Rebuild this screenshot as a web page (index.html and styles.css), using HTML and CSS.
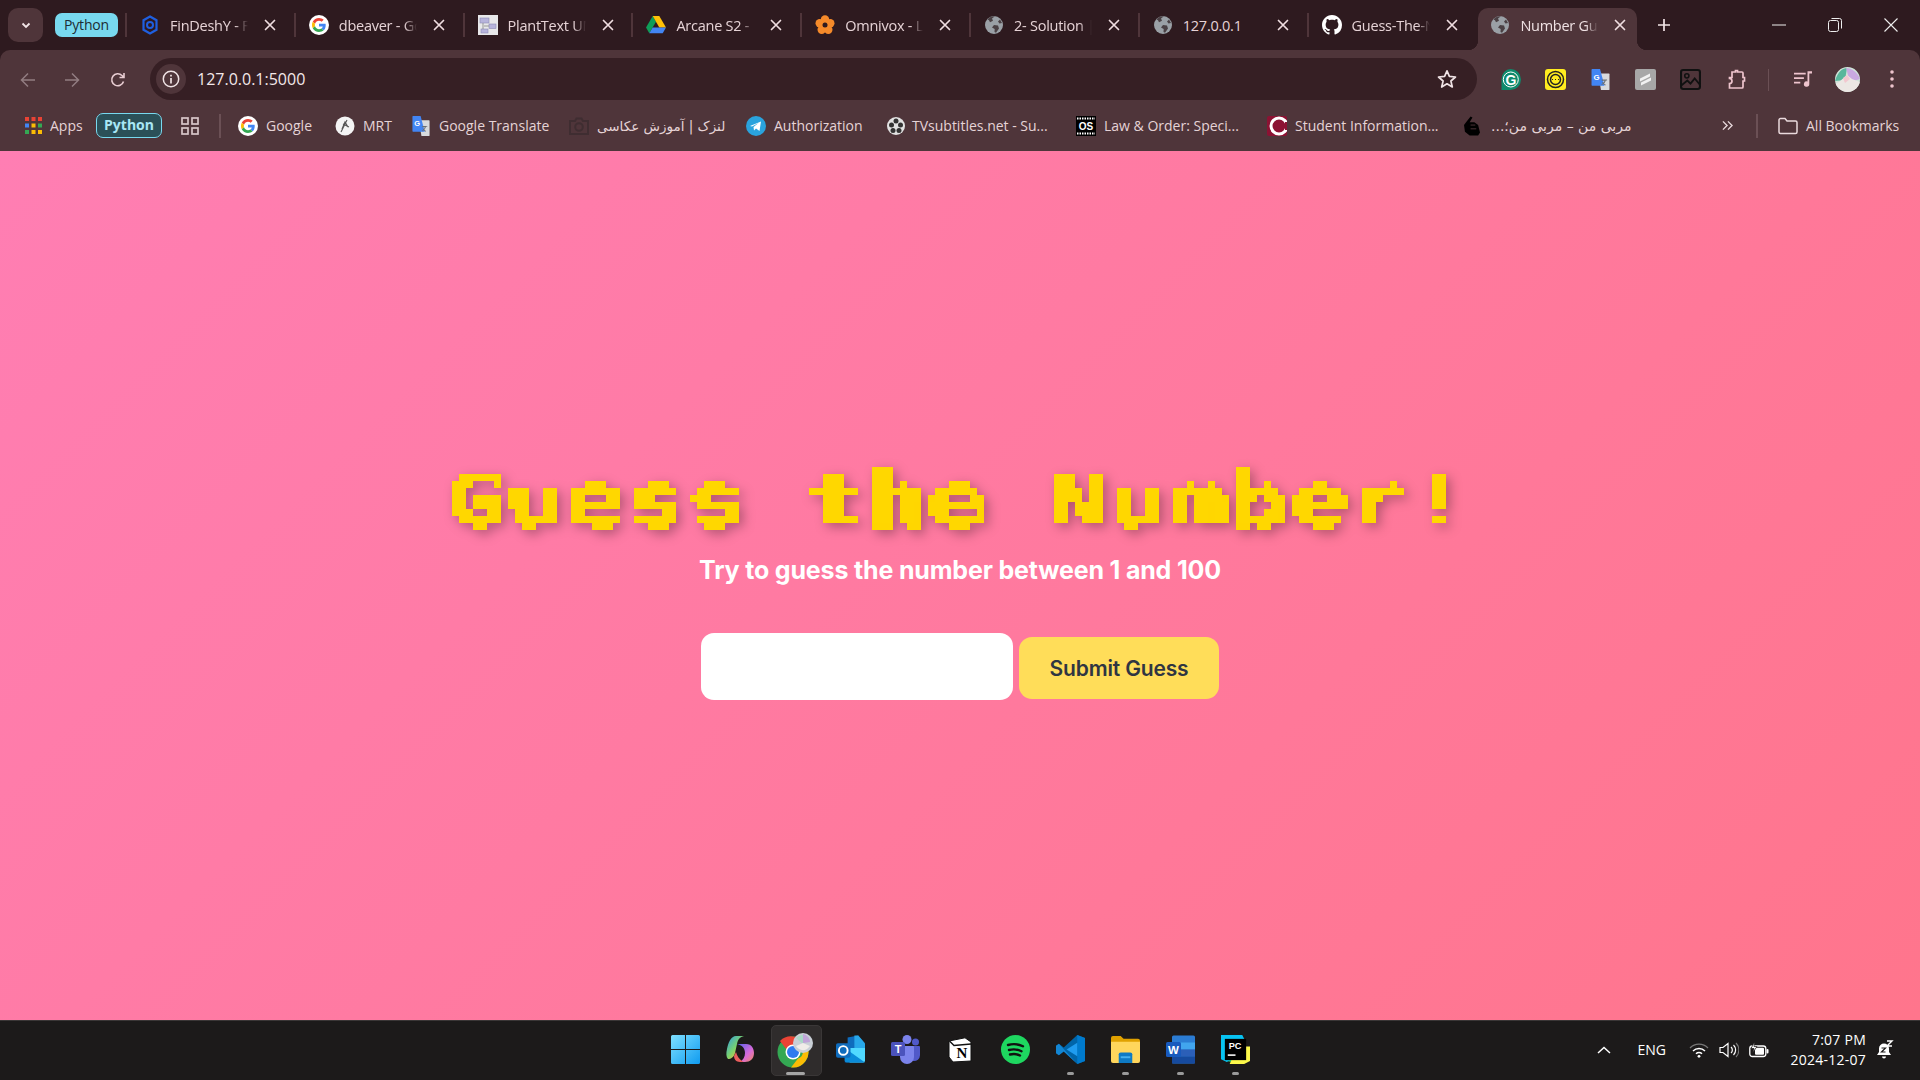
FILE: index.html
```html
<!DOCTYPE html>
<html lang="en">
<head>
<meta charset="utf-8">
<title>Number Guessing Game</title>
<link rel="stylesheet" href="styles.css">
</head>
<body>
<svg class="defs" aria-hidden="true">
  <defs>
    <filter id="pixelate" x="-10" y="-10" width="1100" height="110" filterUnits="userSpaceOnUse" primitiveUnits="userSpaceOnUse" color-interpolation-filters="sRGB">
      <feFlood x="3" y="3" width="1" height="1" flood-color="#000"/>
      <feComposite x="0" y="0" width="7" height="7"/>
      <feTile result="grid"/>
      <feComposite in="SourceGraphic" in2="grid" operator="in"/>
      <feComponentTransfer><feFuncA type="discrete" tableValues="0 1"/></feComponentTransfer>
      <feMorphology operator="dilate" radius="3"/>
    </filter>
  </defs>
  <symbol id="i-g" viewBox="0 0 48 48">
    <path fill="#EA4335" d="M24 9.5c3.54 0 6.71 1.22 9.21 3.6l6.85-6.85C35.9 2.38 30.47 0 24 0 14.62 0 6.51 5.38 2.56 13.22l7.98 6.19C12.43 13.72 17.74 9.5 24 9.5z"/>
    <path fill="#4285F4" d="M46.98 24.55c0-1.57-.15-3.09-.38-4.55H24v9.02h12.94c-.58 2.96-2.26 5.48-4.78 7.18l7.73 6c4.51-4.18 7.09-10.36 7.09-17.65z"/>
    <path fill="#FBBC05" d="M10.53 28.59c-.48-1.45-.76-2.99-.76-4.59s.27-3.14.76-4.59l-7.98-6.19C.92 16.46 0 20.12 0 24c0 3.88.92 7.54 2.56 10.78l7.97-6.19z"/>
    <path fill="#34A853" d="M24 48c6.48 0 11.93-2.13 15.89-5.81l-7.73-6c-2.15 1.45-4.92 2.3-8.16 2.3-6.26 0-11.57-4.22-13.47-9.91l-7.98 6.19C6.51 42.62 14.62 48 24 48z"/>
  </symbol>
  <symbol id="i-gw" viewBox="0 0 20 20">
    <circle cx="10" cy="10" r="10" fill="#fff"/>
    <use href="#i-g" x="3" y="3" width="14" height="14"/>
  </symbol>
  <symbol id="i-globe" viewBox="0 0 20 20">
    <circle cx="10" cy="10" r="9" fill="#9aa0a6"/>
    <path fill="#4a4044" d="M11 1.2 8 3.5l1 2.3-3 1.5-1-2-1.500-.8A9 9 0 0 1 11 1.200zM10 10l4 .6 1 2.800-3 4.300-1.500-.6.200-3.100L8 12.500zM16 4.500l2 3.500-2.500.5-1.500-2z"/>
  </symbol>
  <symbol id="i-x" viewBox="0 0 12 12">
    <path d="M1.500 1.500l9 9m0-9l-9 9" stroke="currentColor" stroke-width="1.700" fill="none" stroke-linecap="round"/>
  </symbol>
  <symbol id="i-translate" viewBox="0 0 21 24">
    <path fill="#d8dadd" d="M8 5h12a1 1 0 0 1 1 1v17a1 1 0 0 1-1 1H11z"/>
    <path fill="#4285f4" d="M1 0h9l5 19H1a1 1 0 0 1-1-1V1a1 1 0 0 1 1-1z"/>
    <path fill="#6a6f75" d="M12 12h6v1h-1.500c-.4 1.500-1 2.500-2 3.500l2 1.500-.6.800-2.200-1.700-1.800 1.600-.6-.8 1.800-1.500-.9-1.500h1l.6.900c.6-.7 1-1.500 1.300-2.300H12z"/>
  </symbol>
</svg>

<div class="chrome">
  <div class="tabstrip">
    <div class="tabsearch"><svg class="ic12" viewBox="0 0 12 12"><path d="M2.500 4.500 6 8l3.500-3.500" stroke="#f3e6e8" stroke-width="1.800" fill="none"/></svg></div>
    <div class="groupchip">Python</div>
    <div class="tab">
      <svg class="fav" viewBox="0 0 20 20"><path fill="none" stroke="#1f5fe0" stroke-width="2.200" d="M10 1.500 16.500 5.200v9.600L10 18.500 3.500 14.800V5.200z"/><circle cx="10" cy="10" r="3" fill="none" stroke="#1f5fe0" stroke-width="2"/></svg>
      <span class="tabtitle">FinDeshY - F</span><svg class="close"><use href="#i-x"/></svg>
    </div>
    <div class="tab">
      <svg class="fav"><use href="#i-gw"/></svg>
      <span class="tabtitle">dbeaver - Go</span><svg class="close"><use href="#i-x"/></svg>
    </div>
    <div class="tab">
      <svg class="fav" viewBox="0 0 20 20"><rect width="20" height="20" fill="#e8e8ea"/><rect x="2" y="3" width="9" height="5" fill="#b7b4dc" stroke="#8d8ab5" stroke-width=".6"/><rect x="11" y="9" width="7" height="4.500" fill="#b7b4dc" stroke="#8d8ab5" stroke-width=".6"/><rect x="3" y="14" width="7" height="4" fill="#b7b4dc" stroke="#8d8ab5" stroke-width=".6"/><path d="M5 8v6M6 11h5" stroke="#777" stroke-width=".7"/></svg>
      <span class="tabtitle">PlantText UM</span><svg class="close"><use href="#i-x"/></svg>
    </div>
    <div class="tab">
      <svg class="fav" viewBox="0 0 20 18"><path fill="#0f9d58" d="M6.700 0 0 11.500 3.300 17.300 10 5.800z"/><path fill="#ffc107" d="M6.700 0h6.600L20 11.500h-6.700z"/><path fill="#4285f4" d="M20 11.500H6.700L3.300 17.300h13.400z"/></svg>
      <span class="tabtitle">Arcane S2 -</span><svg class="close"><use href="#i-x"/></svg>
    </div>
    <div class="tab">
      <svg class="fav" viewBox="0 0 20 20"><g fill="#f58a2a"><circle cx="10" cy="4.500" r="4.200"/><circle cx="15.300" cy="8.300" r="4.200"/><circle cx="13.300" cy="14.800" r="4.200"/><circle cx="6.700" cy="14.800" r="4.200"/><circle cx="4.700" cy="8.300" r="4.200"/></g><circle cx="10" cy="10" r="2.500" fill="#2e1a1f"/></svg>
      <span class="tabtitle">Omnivox - L</span><svg class="close"><use href="#i-x"/></svg>
    </div>
    <div class="tab">
      <svg class="fav"><use href="#i-globe"/></svg>
      <span class="tabtitle">2- Solution |</span><svg class="close"><use href="#i-x"/></svg>
    </div>
    <div class="tab">
      <svg class="fav"><use href="#i-globe"/></svg>
      <span class="tabtitle tabtitle-plain">127.0.0.1</span><svg class="close"><use href="#i-x"/></svg>
    </div>
    <div class="tab">
      <svg class="fav fav-gh" viewBox="0 0 16 16"><path fill="#fff" d="M8 0C3.580 0 0 3.580 0 8c0 3.540 2.290 6.530 5.470 7.590.4.070.55-.17.55-.38 0-.19-.01-.82-.01-1.490-2.010.37-2.530-.49-2.690-.94-.09-.23-.48-.94-.82-1.130-.28-.15-.68-.52-.01-.53.63-.01 1.080.58 1.230.82.72 1.210 1.870.87 2.330.66.07-.52.28-.87.51-1.070-1.780-.2-3.640-.89-3.640-3.950 0-.87.31-1.590.82-2.150-.08-.2-.36-1.020.08-2.120 0 0 .67-.21 2.200.82.64-.18 1.320-.27 2-.27.68 0 1.360.09 2 .27 1.530-1.040 2.200-.82 2.200-.82.44 1.100.16 1.920.08 2.120.51.56.82 1.270.82 2.150 0 3.070-1.870 3.750-3.650 3.950.29.25.54.73.54 1.480 0 1.070-.01 1.930-.01 2.200 0 .21.15.46.55.38A8.013 8.013 0 0 0 16 8c0-4.420-3.580-8-8-8z"/></svg>
      <span class="tabtitle">Guess-The-N</span><svg class="close"><use href="#i-x"/></svg>
    </div>
    <div class="tab tab-active">
      <svg class="fav"><use href="#i-globe"/></svg>
      <span class="tabtitle">Number Gu</span><svg class="close"><use href="#i-x"/></svg>
    </div>
    <svg class="newtab" viewBox="0 0 14 14"><path d="M7 1v12M1 7h12" stroke="#f3e6e8" stroke-width="1.700"/></svg>
    <div class="winctl">
      <svg viewBox="0 0 14 14"><path d="M0 7h14" stroke="#eee" stroke-width="1"/></svg>
      <svg viewBox="0 0 14 14"><rect x=".5" y="2.500" width="10" height="11" rx="2" fill="none" stroke="#eee"/><path d="M3.500 .5h8a2 2 0 0 1 2 2v8" fill="none" stroke="#eee"/></svg>
      <svg viewBox="0 0 14 14"><path d="M.5 .5l13 13m0-13l-13 13" stroke="#eee" stroke-width="1.100"/></svg>
    </div>
  </div>

  <div class="toolbar">
    <svg class="nav nav-dim" viewBox="0 0 16 16"><path d="M15 8H2m6-6.500L1.500 8 8 14.500" fill="none" stroke="currentColor" stroke-width="1.500"/></svg>
    <svg class="nav nav-dim" viewBox="0 0 16 16"><path d="M1 8h13M8 1.500 14.500 8 8 14.500" fill="none" stroke="currentColor" stroke-width="1.500"/></svg>
    <svg class="nav" viewBox="0 0 16 16"><path d="M13.500 9.500A6 6 0 1 1 12 3.500L14 5.500M14 1v4.500H9.500" fill="none" stroke="currentColor" stroke-width="1.600"/></svg>
    <div class="omnibox">
      <div class="siteinfo"><svg viewBox="0 0 18 18"><circle cx="9" cy="9" r="7.700" fill="none" stroke="#f0e3e5" stroke-width="1.500"/><path d="M9 8v5.500M9 4.800v1.800" stroke="#f0e3e5" stroke-width="1.700"/></svg></div>
      <span class="url">127.0.0.1:5000</span>
      <svg class="star" viewBox="0 0 20 20"><path d="M10 1.800 12.400 7.400 18.500 8 13.900 12 15.300 18 10 14.800 4.700 18 6.100 12 1.500 8 7.600 7.400z" fill="none" stroke="#f0e3e5" stroke-width="1.700" stroke-linejoin="round"/></svg>
    </div>
    <div class="ext">
      <svg viewBox="0 0 21 21"><path fill="#0f8a6c" d="M10.500 0a10.500 10.500 0 0 1 0 21H1.500V10.500A9 10.500 0 0 1 10.500 0z"/><circle cx="10.800" cy="10.500" r="7.500" fill="none" stroke="#fff" stroke-width="1"/><text x="11" y="15.500" class="svgt" fill="#fff" font-size="14" font-weight="700" text-anchor="middle">G</text></svg>
      <svg viewBox="0 0 21 21"><rect width="21" height="21" rx="3" fill="#ffec1f"/><circle cx="10.500" cy="10.500" r="8" fill="none" stroke="#222" stroke-width="1.500"/><circle cx="10.500" cy="10.500" r="5" fill="none" stroke="#222" stroke-width="1.500"/><path d="M7 10.500h1M10 10.500h1M13 10.500h1" stroke="#222" stroke-width="1.200"/></svg>
      <svg viewBox="0 0 21 24"><use href="#i-translate"/><text x="6" y="12" class="svgt" fill="#fff" font-size="9" font-weight="700" text-anchor="middle">G</text></svg>
      <svg viewBox="0 0 21 21"><rect width="21" height="21" rx="2" fill="#a7a7a7"/><path d="M5 9.500l10-5v3l-10 5zM6 13.500l10-5v3l-10 5z" fill="#f1f1f1"/></svg>
      <svg viewBox="0 0 20 20"><rect x="1" y="1" width="18" height="18" rx="2" fill="none" stroke="#111" stroke-width="2"/><circle cx="6.500" cy="6.500" r="2" fill="none" stroke="#111" stroke-width="1.500"/><path d="M1.500 15.500 7 11l3 3 4-5 5 6" fill="none" stroke="#111" stroke-width="1.800"/></svg>
      <svg viewBox="0 0 21 21"><path d="M7 3h3.500V1.500h2V3H17a1 1 0 0 1 1 1v4.500h1.500v3.500H18v6a1 1 0 0 1-1 1H4.500v-4.500a2.500 2.500 0 0 0 0-5V8.500H7z" fill="none" stroke="#eec4cd" stroke-width="1.700"/></svg>
    </div>
    <span class="toolsep"></span>
    <svg class="media" viewBox="0 0 20 20"><path d="M0 4h13M0 9h11M0 14h7" stroke="#eec4cd" stroke-width="1.800"/><path d="M15 1.500h5V4h-3v11.500a3 3 0 1 1-2-2.800z" fill="#eec4cd"/></svg>
    <svg class="avatar" viewBox="0 0 25 25"><defs><clipPath id="av"><circle cx="12.500" cy="12.500" r="12.500"/></clipPath></defs><g clip-path="url(#av)"><rect width="25" height="25" fill="#cfe3d8"/><path d="M0 14C3 4 8 1 12 1l-2 12z" fill="#58b79b"/><path d="M11 1c6 0 11 4 14 11l-10 3z" fill="#c9a9e0"/><path d="M4 15 12 8l5 4 8 3v10H0V17z" fill="#ece7e4"/><path d="M8 11l4-3 3 4-5 4z" fill="#f2c7cf"/></g></svg>
    <svg class="dots" viewBox="0 0 4 18"><circle cx="2" cy="2" r="1.800" fill="#eec4cd"/><circle cx="2" cy="9" r="1.800" fill="#eec4cd"/><circle cx="2" cy="16" r="1.800" fill="#eec4cd"/></svg>
  </div>

  <div class="bookmarks">
    <div class="bm">
      <svg class="bi bi-apps" viewBox="0 0 17 17"><g><rect width="4" height="4" fill="#ea4335"/><rect x="6.500" width="4" height="4" fill="#ea4335"/><rect x="13" width="4" height="4" fill="#ea4335"/><rect y="6.500" width="4" height="4" fill="#4285f4"/><rect x="6.500" y="6.500" width="4" height="4" fill="#fbbc05"/><rect x="13" y="6.500" width="4" height="4" fill="#34a853"/><rect y="13" width="4" height="4" fill="#34a853"/><rect x="6.500" y="13" width="4" height="4" fill="#fbbc05"/><rect x="13" y="13" width="4" height="4" fill="#fbbc05"/></g></svg>
      <span>Apps</span>
    </div>
    <div class="bm"><span class="groupchip2">Python</span></div>
    <div class="bm"><svg class="bi bi-grid" viewBox="0 0 18 18"><g fill="none" stroke="#d8c6c9" stroke-width="1.700"><rect x="1" y="1" width="6" height="6"/><rect x="11" y="1" width="6" height="6"/><rect x="1" y="11" width="6" height="6"/><rect x="11" y="11" width="6" height="6"/></g></svg></div>
    <div class="bm"><span class="bmsep"></span></div>
    <div class="bm"><svg class="bi"><use href="#i-gw"/></svg><span>Google</span></div>
    <div class="bm"><svg class="bi" viewBox="0 0 20 20"><circle cx="10" cy="10" r="9.500" fill="#f4f4f4"/><path d="M6 16 12 4M8 8l6 3M7 13l3-7 3 5" stroke="#555" stroke-width="1.100" fill="none"/></svg><span>MRT</span></div>
    <div class="bm"><svg class="bi" viewBox="0 0 21 24"><use href="#i-translate"/><text x="6" y="12" class="svgt" fill="#fff" font-size="9" font-weight="700" text-anchor="middle">G</text></svg><span>Google Translate</span></div>
    <div class="bm"><svg class="bi" viewBox="0 0 20 20"><path d="M1 5h5l1.500-2.500h5L14 5h5v13H1z" fill="none" stroke="#3f2d31" stroke-width="2"/><circle cx="10" cy="11" r="3.800" fill="none" stroke="#3f2d31" stroke-width="2"/></svg><span class="fa fa-1" dir="rtl">لنزک | آموزش عکاسی</span></div>
    <div class="bm"><svg class="bi" viewBox="0 0 20 20"><circle cx="10" cy="10" r="10" fill="#2aa3dd"/><path d="M4 10 15 5.500 13.500 15l-3.500-2.500-2 2-.5-3.500 5-4-6.500 3.500z" fill="#fff"/></svg><span>Authorization</span></div>
    <div class="bm bm-tight"><svg class="bi" viewBox="0 0 20 20"><circle cx="10" cy="10" r="9" fill="#e2e2e2"/><g fill="#333"><circle cx="10" cy="5" r="2.500"/><circle cx="5.500" cy="9" r="2.500"/><circle cx="14.500" cy="9" r="2.500"/><circle cx="7" cy="14.500" r="2.500"/><circle cx="13" cy="14.500" r="2.500"/></g></svg><span>TVsubtitles.net - Su...</span></div>
    <div class="bm"><svg class="bi" viewBox="0 0 20 20"><rect width="20" height="20" fill="#000"/><path d="M1 2.500h18M1 17.500h18" stroke="#fff" stroke-width="1.800" stroke-dasharray="1.500 1"/><text x="10" y="14" class="svgt" fill="#fff" font-size="10" font-weight="700" text-anchor="middle">OS</text></svg><span>Law &amp; Order: Speci...</span></div>
    <div class="bm"><svg class="bi" viewBox="0 0 20 20"><rect width="20" height="20" rx="2" fill="#8c1233"/><circle cx="12" cy="10" r="8" fill="none" stroke="#fff" stroke-width="3"/><rect x="18" y="6" width="2" height="8" fill="#8c1233"/></svg><span>Student Information...</span></div>
    <div class="bm"><svg class="bi bi-fist" viewBox="0 0 17 20"><path d="M7 0 9 1 6 6l5 0 4 3 2 8-2 3H6L1 16 0 9 3 5z" fill="#000"/><path d="M7 9h5M7 13h6" stroke="#4f353a"/></svg><span class="fa fa-2" dir="rtl">مربی من – مربی من؛...</span></div>
    <div class="bm"><svg class="bi bi-more" viewBox="0 0 12 12"><path d="M1 1.500 5.500 6 1 10.500M6.500 1.500 11 6l-4.500 4.500" fill="none" stroke="#eadadd" stroke-width="1.500"/></svg></div>
    <div class="bm"><span class="bmsep"></span></div>
    <div class="bm"><svg class="bi" viewBox="0 0 20 18"><path d="M1 3a1.500 1.500 0 0 1 1.500-1.500H7L9 4h8.500A1.500 1.500 0 0 1 19 5.500V15a1.500 1.500 0 0 1-1.500 1.500h-15A1.500 1.500 0 0 1 1 15z" fill="none" stroke="#eadadd" stroke-width="1.500"/></svg><span>All Bookmarks</span></div>
  </div>
</div>

<main class="page">
  <h1 class="title"><span class="title-ink">Guess the Number!</span></h1>
  <p class="lead">Try to guess the number between 1 and 100</p>
  <form class="guess">
    <input class="guess-input" type="text" aria-label="Your guess">
    <button class="guess-btn" type="button">Submit Guess</button>
  </form>
</main>

<footer class="taskbar">
  <div class="tb-apps">
    <div class="tb"><svg viewBox="0 0 29 29"><defs><linearGradient id="win" x1="0" y1="0" x2="1" y2="1"><stop offset="0" stop-color="#7fe0ff"/><stop offset="1" stop-color="#0f9bf0"/></linearGradient></defs><path fill="url(#win)" d="M0 1.500A1.500 1.500 0 0 1 1.500 0H14v14H0zM15 0h12.500A1.500 1.500 0 0 1 29 1.500V14H15zM0 15h14v14H1.500A1.500 1.500 0 0 1 0 27.500zM15 15h14v12.500a1.500 1.500 0 0 1-1.500 1.500H15z"/></svg></div>
    <div class="tb"><svg viewBox="0 0 29 29"><defs><linearGradient id="cop" x1="0" y1="0" x2="1" y2="1"><stop offset="0" stop-color="#2f9be8"/><stop offset=".5" stop-color="#7ad36d"/><stop offset=".8" stop-color="#f5b93f"/><stop offset="1" stop-color="#ea5d7a"/></linearGradient><linearGradient id="cop2" x1="0" y1="0" x2="1" y2="1"><stop offset="0" stop-color="#5a5ff0"/><stop offset=".6" stop-color="#d86bd8"/><stop offset="1" stop-color="#f08a5a"/></linearGradient></defs><path fill="url(#cop2)" d="M11 9h9c6 0 8 5 8 9 0 6-4 9-9 9h-5c3-2 5-5 5-9 0-5-3-8-8-9z"/><path fill="url(#cop)" d="M10 1h8c-4 1-6 3-7 8l-2 9c-1 4-4 6-7 6-2-2-2-6-1-10C2 8 5 1 10 1z"/><path fill="#ea5d5d" d="M10 17c1 4 3 7 6 9 1 1 2 1 3 1h-5c-4 0-6-3-6-6z"/></svg></div>
    <div class="tb tb-active"><svg class="tb-chrome" viewBox="0 0 36 36"><circle cx="16" cy="20" r="15.500" fill="#34a853"/><path d="M16 4.500a15.500 15.500 0 0 1 14 9H16a7 7 0 0 0-6.500 4L3 9A15.500 15.500 0 0 1 16 4.500z" fill="#ea4335"/><path d="M30 13.500A15.500 15.500 0 0 1 14 35.400l7-9a7 7 0 0 0 1-13z" fill="#fbbc05"/><circle cx="16" cy="20" r="7.500" fill="#fff"/><circle cx="16" cy="20" r="6" fill="#2f7bf0"/><circle cx="26" cy="11" r="10" fill="#c9cfd6"/><path d="M19 6c4-4 10-4 13 0l-6 6z" fill="#a9d8c6"/><path d="M26 2c4 1 7 4 7 8l-7 1z" fill="#c0a4d8"/><path d="M19 14c3 5 10 6 14 0l-7-3z" fill="#f0ece8"/></svg></div>
    <div class="tb"><svg viewBox="0 0 30 29"><path fill="#0f6cbd" d="M12 2 23 0l6 8v5H12z"/><path fill="#28a8ea" d="M19 0h4l7 8v5H19z"/><path fill="#14447d" d="M9 13h21v13a2 2 0 0 1-2 2H9z"/><path fill="#50d9ff" d="M14 13h16v13a2 2 0 0 1-2 2H14z"/><path fill="#0a8bd8" d="M9 13l21 15H11a2 2 0 0 1-2-2z"/><rect y="8" width="15" height="15" rx="2" fill="#0f6cbd"/><circle cx="7.500" cy="15.500" r="4.500" fill="none" stroke="#fff" stroke-width="2"/></svg></div>
    <div class="tb"><svg viewBox="0 0 29 29"><circle cx="16" cy="4.500" r="4.500" fill="#7b83eb"/><circle cx="24.500" cy="7" r="3.500" fill="#5059c9"/><path fill="#5059c9" d="M19 11h9a1 1 0 0 1 1 1v8a6 6 0 0 1-7 6z"/><path fill="#7b83eb" d="M9 11h13a1 1 0 0 1 1 1v10a7 7 0 0 1-14 0z"/><rect y="7" width="14" height="14" rx="1.500" fill="#4b53bc"/><text x="7" y="18" class="svgt" fill="#fff" font-size="11" font-weight="700" text-anchor="middle">T</text></svg></div>
    <div class="tb"><svg class="tb-notion" viewBox="0 0 24 25"><path d="M1 4 17 .8 23 5v19L5 25 1 20z" fill="#fff" stroke="#111" stroke-width="1"/><path d="M1.500 4 6 8.500 23 7" fill="none" stroke="#111" stroke-width="1.400"/><text x="14" y="21" class="svgs" fill="#000" font-size="15" font-weight="700" text-anchor="middle">N</text></svg></div>
    <div class="tb"><svg viewBox="0 0 29 29"><circle cx="14.500" cy="14.500" r="14.500" fill="#1ed760"/><path d="M7 10c5-1.500 10-1.200 15 1.300M8 15c4-1 8.500-.8 12.500 1.200M9 19.500c3.500-.8 7-.6 10 1" fill="none" stroke="#111" stroke-width="2.400" stroke-linecap="round"/></svg></div>
    <div class="tb tb-open"><svg viewBox="0 0 30 30"><path fill="#0065a9" d="M22 0 8 13 3 9 0 11v8l3 2 5-4 14 13 8-3V3z"/><path fill="#007acc" d="M22 0l8 3v24l-8 3z"/><path fill="#1f9cf0" d="M22 8 11 15l11 7z"/><path fill="#1f9cf0" d="M0 11l3-2 19 21-14-13-5 4-3-2z" opacity=".6"/></svg></div>
    <div class="tb tb-open"><svg viewBox="0 0 30 28"><path fill="#e0a100" d="M0 2a2 2 0 0 1 2-2h8l3 3h15a2 2 0 0 1 2 2v3H0z"/><path fill="#ffd65c" d="M0 6h30v20a2 2 0 0 1-2 2H2a2 2 0 0 1-2-2z"/><path fill="#0e7ac4" d="M8 19a2 2 0 0 1 2-2h10a2 2 0 0 1 2 2v9H8z"/><rect x="10" y="21" width="10" height="2" fill="#46b0ee"/></svg></div>
    <div class="tb tb-open"><svg viewBox="0 0 29 28"><rect x="6" width="23" height="28" rx="1.500" fill="#2b7cd3"/><rect x="6" y="7" width="23" height="7" fill="#41a5ee"/><rect x="6" y="14" width="23" height="7" fill="#2b5fb8"/><rect x="6" y="21" width="23" height="7" fill="#164a9e"/><rect y="6.500" width="15" height="15" rx="1.500" fill="#185abd"/><text x="7.500" y="18.500" class="svgt" fill="#fff" font-size="11.500" font-weight="700" text-anchor="middle">W</text></svg></div>
    <div class="tb tb-open"><svg viewBox="0 0 30 30"><path fill="#21d789" d="M0 0h19l6 5-6 24-14-2z"/><path fill="#07c3f2" d="M0 0h22l3 6v10L6 28l-6-3z"/><path fill="#fcf84a" d="M17 12h13v15l-6 3H9z"/><rect x="4" y="4" width="22" height="22" fill="#000"/><text x="14.500" y="14.500" class="svgt" fill="#fff" font-size="9.500" font-weight="700" text-anchor="middle">PC</text><rect x="7" y="20" width="8" height="1.600" fill="#fff"/></svg></div>
  </div>
  <div class="tray">
    <svg class="tray-chev" viewBox="0 0 14 8"><path d="M1 7 7 1.500 13 7" fill="none" stroke="#fff" stroke-width="1.500"/></svg>
    <span class="tray-lang">ENG</span>
    <svg class="tray-i" viewBox="0 0 20 16"><path d="M1 6a12.500 12.500 0 0 1 18 0" fill="none" stroke="#777" stroke-width="1.300"/><path d="M4 9a8.500 8.500 0 0 1 12 0M7 11.800a4.300 4.300 0 0 1 6 0" fill="none" stroke="#fff" stroke-width="1.500"/><circle cx="10" cy="14.300" r="1.400" fill="#fff"/></svg>
    <svg class="tray-i" viewBox="0 0 20 16"><path d="M1 5.500h3L9 1.500v13l-5-4H1z" fill="none" stroke="#fff" stroke-width="1.200"/><path d="M12 5a4 4 0 0 1 0 6M14.500 3a7 7 0 0 1 0 10" fill="none" stroke="#fff" stroke-width="1.200"/><path d="M17 1a10 10 0 0 1 0 14" fill="none" stroke="#777" stroke-width="1.100"/></svg>
    <svg class="tray-i" viewBox="0 0 20 16"><rect x=".8" y="4" width="16" height="10.500" rx="2.500" fill="none" stroke="#fff" stroke-width="1.300"/><rect x="6" y="5.700" width="9" height="7" rx="1" fill="#fff"/><rect x="17.500" y="7" width="2" height="4.500" rx="1" fill="#fff"/><path d="M5.500 0 2 6.500h3L3.500 11 8 4.500H5z" fill="#fff" stroke="#1b1919" stroke-width=".7"/></svg>
    <div class="clock"><span>7:07 PM</span><span>2024-12-07</span></div>
    <svg class="bell" viewBox="0 0 17 20"><path d="M7 3.500a5 5 0 0 0-5 5V12l-2 3h14l-2-3V8.500a5 5 0 0 0-5-5z" fill="#fff"/><path d="M5 16.500h4a2 2 0 0 1-4 0z" fill="#fff"/><path d="M4.500 8h4L4.500 12h4" stroke="#1b1919" stroke-width="1.200" fill="none"/><path d="M10 1h5l-5 5h5" stroke="#fff" stroke-width="1.400" fill="none"/></svg>
  </div>
</footer>
</body>
</html>
```

FILE: styles.css
```css
* { box-sizing: border-box; }
html, body { margin: 0; height: 100%; }
body {
  width: 1920px;
  height: 1080px;
  overflow: hidden;
  display: flex;
  flex-direction: column;
  font-family: "Open Sans", "Noto Sans", sans-serif;
}
.defs { position: absolute; width: 0; height: 0; }
.svgt { font-family: "Liberation Sans", sans-serif; }
.svgs { font-family: "Liberation Serif", serif; }

/* browser chrome */
.chrome { flex: 0 0 151px; background: #2e1a1f; display: flex; flex-direction: column; }
.tabstrip { height: 50px; display: flex; align-items: flex-start; padding-left: 8px; }
.tabsearch { width: 35px; height: 34px; margin-top: 8px; border-radius: 10px; background: #4f353a; display: flex; align-items: center; justify-content: center; }
.ic12 { width: 12px; height: 12px; }
.groupchip { width: 63px; height: 24px; margin: 13px 6px 0 12px; border-radius: 7px; background: #78d9ef; color: #1d2c33; font-size: 14px; line-height: 24px; text-align: center; letter-spacing: -.2px; }
.tab { position: relative; flex: 0 0 168.8px; height: 42px; margin-top: 8px; padding: 0 0 8px 16px; display: flex; align-items: center; color: #e6d3d6; border-left: 2px solid transparent; }
.tab::before { content: ""; position: absolute; left: -1px; top: 5px; width: 2px; height: 24px; background: #4f353a; }
.fav { width: 20px; height: 20px; flex: none; margin-left: -2px; }
.fav-gh { width: 20px; height: 20px; }
.tabtitle { width: 78px; margin-left: 10px; font-size: 14.5px; letter-spacing: -.25px; white-space: nowrap; overflow: hidden; -webkit-mask-image: linear-gradient(90deg, #000 84%, transparent 100%); mask-image: linear-gradient(90deg, #000 84%, transparent 100%); }
.tabtitle-plain { -webkit-mask-image: none; mask-image: none; }
.close { width: 12px; height: 12px; flex: none; margin-left: 16px; color: #efdde0; }
.tab-active { color: #efe1e3; }
.tab-active::before { left: 2px; top: 0; width: 159px; height: 42px; background: #4f353a; border-radius: 10px 10px 0 0; }
.tab-active > * { position: relative; }
.tab-active::after { content: ""; position: absolute; left: -8px; bottom: 0; width: 179px; height: 10px; background:
  radial-gradient(circle at 0 0, #2e1a1f 10px, #4f353a 10.5px) 0 0 / 10px 10px no-repeat,
  radial-gradient(circle at 100% 0, #2e1a1f 10px, #4f353a 10.5px) 100% 0 / 10px 10px no-repeat; }
.newtab { width: 14px; height: 14px; margin: 18px 0 0 14px; flex: none; }
.winctl { margin-left: auto; display: flex; gap: 42px; padding: 18px 22px 0 0; }
.winctl svg { width: 14px; height: 14px; }

.toolbar { height: 50px; background: #4f353a; border-radius: 10px 10px 0 0; display: flex; align-items: flex-start; padding-left: 20px; color: #efdde0; }
.nav { width: 16px; height: 16px; margin: 22px 28px 0 0; flex: none; }
.nav-dim { color: #927d81; }
.toolbar .nav:nth-child(3) { margin-left: 2px; margin-right: 24px; color: #e8cdd2; }
.omnibox { width: 1327px; height: 42px; margin-top: 8px; background: #361f24; border-radius: 21px; display: flex; align-items: center; padding: 0 20px 0 6px; }
.siteinfo { width: 30px; height: 30px; border-radius: 50%; background: #4f353a; display: flex; align-items: center; justify-content: center; }
.siteinfo svg { width: 18px; height: 18px; }
.url { margin-left: 11px; font-size: 16px; letter-spacing: 0; color: #f3e7e9; }
.star { width: 20px; height: 20px; margin-left: auto; }
.ext { display: flex; gap: 24px; margin: 19px 0 0 23px; }
.ext svg { width: 21px; height: 21px; display: block; }
.toolsep { width: 1px; height: 22px; margin: 19px 0 0 22px; background: #6b5055; }
.media { width: 20px; height: 18px; margin: 20px 0 0 24px; }
.avatar { width: 25px; height: 25px; margin: 17px 0 0 22px; }
.dots { width: 4px; height: 18px; margin: 20px 0 0 30px; }

.bookmarks { height: 51px; background: #4f353a; padding-left: 25px; display: grid; grid-template-columns: 71px 85px 38px 19px 97px 76px 158px 177px 140px 190px 191px 197px 258px 34px 22px auto; align-items: center; color: #e5d3d6; font-size: 14px; letter-spacing: 0; }
.bm { display: flex; align-items: center; gap: 8px; white-space: nowrap; overflow: visible; }
.bm-tight { gap: 6px; }
.bi { width: 20px; height: 20px; flex: none; display: block; }
.bi-apps { width: 17px; height: 17px; }
.bi-grid { width: 18px; height: 18px; }
.bi-fist { width: 16px; height: 20px; margin-right: 3px; }
.bi-more { width: 11px; height: 11px; }
.groupchip2 { width: 66px; height: 25px; border-radius: 7px; border: 1.500px solid #78d9ef; background: #2b5058; color: #a9e7f5; font-weight: 700; font-size: 14px; line-height: 21px; text-align: center; }
.bmsep { width: 2px; height: 24px; background: #6b5055; }
.fa { font-family: "DejaVu Sans", sans-serif; letter-spacing: 0; }
.fa-1 { font-size: 13.500px; }
.fa-2 { font-size: 14px; }

/* page */
.page { flex: 1 1 auto; min-height: 0; background: linear-gradient(135deg, #ff7eb3, #ff758c); display: flex; flex-direction: column; align-items: center; padding-top: 316px; }
.title { margin: 0; height: 66px; width: 1030px; font: 700 72px/66px "DejaVu Sans Mono", monospace; color: #ffd700; -webkit-text-stroke: 2.300px #ffd700; white-space: nowrap; filter: url(#pixelate) drop-shadow(4px 4px 6px rgba(0,0,0,.3)); }
.title-ink { display: inline-block; transform: scaleX(1.39); transform-origin: 0 50%; }
.lead { margin: 19px 0 0; font: 700 25px/36px Inter, sans-serif; letter-spacing: -.17px; color: #fff; }
.guess { margin-top: 45px; display: flex; align-items: flex-end; gap: 6px; }
.guess-input { width: 312px; height: 67px; border: 0; border-radius: 13px; background: #fff; }
.guess-btn { width: 200px; height: 62px; margin-bottom: 1px; border: 0; border-radius: 13px; background: #ffdd59; color: #2f3542; font: 600 21px "Inter", sans-serif; letter-spacing: -.15px; }

/* taskbar */
.taskbar { position: relative; flex: 0 0 60px; background: #1c1a1a; border-top: 1px solid #3a3636; display: flex; justify-content: center; }
.tb-apps { display: flex; }
.tb { position: relative; width: 55px; height: 59px; padding-bottom: 2px; display: flex; align-items: center; justify-content: center; }
.tb svg { width: 29px; height: 29px; }
.tb .tb-notion { width: 24px; height: 25px; }
.tb .tb-chrome { width: 36px; height: 36px; }
.tb-active::before { content: ""; position: absolute; left: 3px; top: 4px; width: 49px; height: 49px; background: #2f2c2c; border: 1px solid #3a3737; border-radius: 5px; z-index: 0; }
.tb-active svg { position: relative; }
.tb-active::after { content: ""; position: absolute; left: 18px; bottom: 5px; width: 19px; height: 3px; border-radius: 2px; background: #a5a5a5; }
.tb-open::after { content: ""; position: absolute; left: 24px; bottom: 5px; width: 7px; height: 3px; border-radius: 2px; background: #9a9a9a; }
.tray { position: absolute; right: 26px; top: 0; height: 59px; padding-bottom: 2px; display: flex; align-items: center; color: #fff; }
.tray-chev { width: 14px; height: 8px; margin-right: 27px; }
.tray-lang { font-size: 14px; margin-right: 23px; }
.tray-i { width: 20px; height: 16px; margin-right: 10px; }
.clock { display: flex; flex-direction: column; align-items: flex-end; font-size: 14px; line-height: 20px; width: 87px; letter-spacing: .25px; }
.bell { width: 17px; height: 20px; margin-left: 11px; }
```
